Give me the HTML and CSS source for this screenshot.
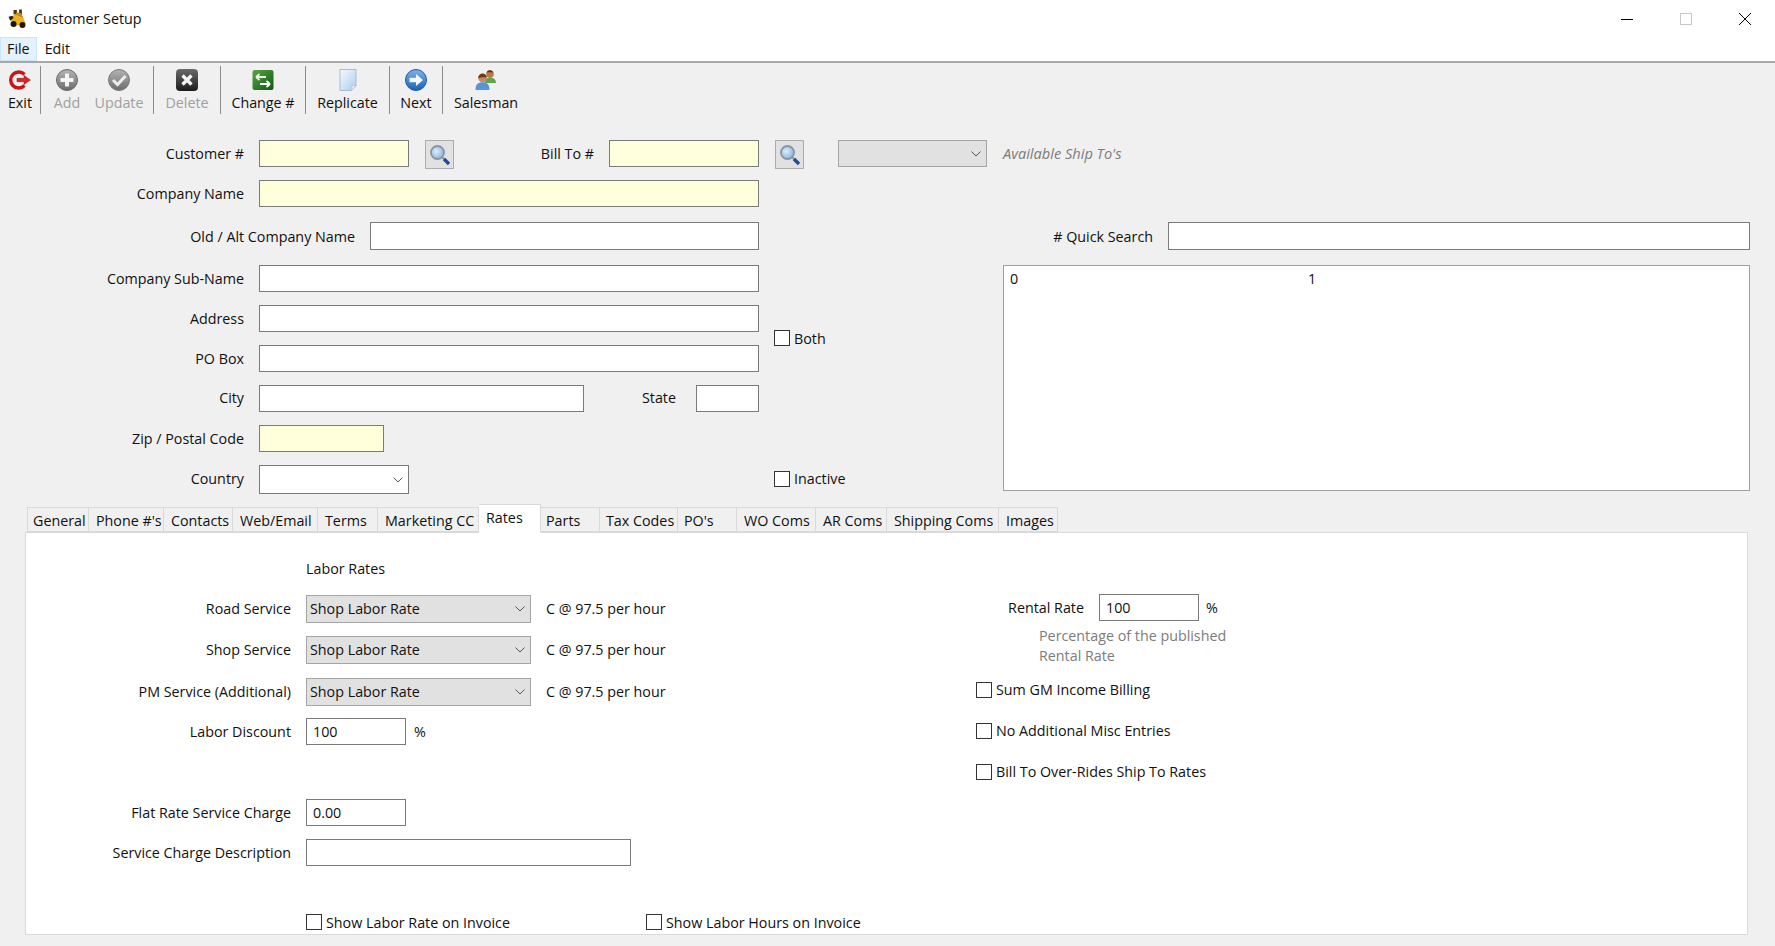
FILE: index.html
```html
<!DOCTYPE html>
<html lang="en">
<head>
<meta charset="utf-8">
<title>Customer Setup</title>
<link rel="stylesheet" href="styles.css">
</head>
<body>
<svg class="defs" width="0" height="0" aria-hidden="true">
  <defs>
    <linearGradient id="gGrey" x1="0" y1="0" x2="0" y2="1"><stop offset="0" stop-color="#b4b4b4"/><stop offset="1" stop-color="#6c6c6c"/></linearGradient>
    <linearGradient id="gDark" x1="0" y1="0" x2="0" y2="1"><stop offset="0" stop-color="#6a6a6a"/><stop offset="1" stop-color="#1c1c1c"/></linearGradient>
    <linearGradient id="gGreen" x1="0" y1="0" x2="1" y2="1"><stop offset="0" stop-color="#5aa548"/><stop offset="1" stop-color="#0f5a0d"/></linearGradient>
    <linearGradient id="gBlue" x1="0" y1="0" x2="0" y2="1"><stop offset="0" stop-color="#7fb4ea"/><stop offset="1" stop-color="#1c60b4"/></linearGradient>
    <linearGradient id="gPaper" x1="0" y1="0" x2="1" y2="1"><stop offset="0" stop-color="#f6fafe"/><stop offset="1" stop-color="#a9cdee"/></linearGradient>
    <radialGradient id="gLens" cx="0.4" cy="0.4" r="0.7"><stop offset="0" stop-color="#dcecfb"/><stop offset="1" stop-color="#7fb0e0"/></radialGradient>
  </defs>
</svg>

<header class="titlebar">
  <svg class="logo" viewBox="0 0 18 18" width="20" height="20">
    <path d="M5 1h3v4H5z M10 .5h2.500v5.500H10z" fill="#4a3414"/>
    <path d="M1.500 9 6 5l8 3.500 2 5-9 1.500z" fill="#eeb21c"/>
    <path d="M6 5 8 3l4 1 2 4.500z" fill="#c98a10"/>
    <circle cx="5" cy="13.500" r="2.700" fill="#1c1710"/>
    <circle cx="13" cy="14.500" r="2.700" fill="#1c1710"/>
    <path d="M.5 7l3.500-1 1 2-3 2.500z" fill="#2a2016"/>
  </svg>
  <span class="title-text">Customer Setup</span>
  <div class="win-buttons">
    <svg viewBox="0 0 14 14" width="14" height="14"><path d="M1 7.500h12" stroke="#000" stroke-width="1"/></svg>
    <svg viewBox="0 0 14 14" width="14" height="14"><rect x="1.500" y="1.500" width="11" height="11" fill="none" stroke="#c8c8c8"/></svg>
    <svg viewBox="0 0 14 14" width="14" height="14"><path d="M1 1l12 12M13 1 1 13" stroke="#000" stroke-width="1"/></svg>
  </div>
</header>

<nav class="menubar">
  <span class="menu-item menu-active">File</span>
  <span class="menu-item">Edit</span>
</nav>

<div class="toolbar">
  <div class="tool w-exit">
    <svg viewBox="0 0 24 24" width="24" height="24"><path d="M16.500 6.500A8 8 0 1 0 16.500 17.500" fill="none" stroke="#c81414" stroke-width="3.400"/><path d="M9 10.300h7V7.500l6.500 4.500-6.500 4.500v-2.800H9z" fill="#d8252a" stroke="#8c1010" stroke-width=".5"/></svg>
    <span class="tool-label">Exit</span>
  </div>
  <span class="tool-sep"></span>
  <div class="tool w-add">
    <svg viewBox="0 0 24 24" width="24" height="24"><circle cx="12" cy="12" r="10.500" fill="url(#gGrey)" stroke="#6a6a6a"/><path d="M10 5.500h4V10h4.500v4H14v4.500h-4V14H5.500v-4H10z" fill="#f4f4f4"/></svg>
    <span class="tool-label is-off">Add</span>
  </div>
  <div class="tool w-update">
    <svg viewBox="0 0 24 24" width="24" height="24"><circle cx="12" cy="12" r="10.500" fill="url(#gGrey)" stroke="#7a7a7a"/><path d="M6 12l4.500 4.500L18.500 8" fill="none" stroke="#ececec" stroke-width="3"/></svg>
    <span class="tool-label is-off">Update</span>
  </div>
  <span class="tool-sep sep-after-update"></span>
  <div class="tool w-delete">
    <svg viewBox="0 0 24 24" width="24" height="24"><rect x="1" y="1" width="22" height="22" rx="4" fill="url(#gDark)"/><path d="M7.500 7.500l9 9M16.500 7.500l-9 9" stroke="#f4f4f4" stroke-width="3.400"/></svg>
    <span class="tool-label is-off">Delete</span>
  </div>
  <span class="tool-sep"></span>
  <div class="tool w-change">
    <svg viewBox="0 0 24 24" width="24" height="24"><rect x="1.500" y="2" width="21" height="20" rx="2" fill="url(#gGreen)"/><path d="M5 9h10M5 9l3.500-3M5 9l3.500 3" fill="none" stroke="#e6f2e0" stroke-width="1.800"/><path d="M19 16H9M19 16l-3.500-3M19 16l-3.500 3" fill="none" stroke="#fff" stroke-width="1.800"/></svg>
    <span class="tool-label">Change #</span>
  </div>
  <span class="tool-sep"></span>
  <div class="tool w-replicate">
    <svg viewBox="0 0 24 24" width="24" height="24"><path d="M4 1.500h16v16L15.500 22.500H4z" fill="url(#gPaper)" stroke="#a9bdd2"/><path d="M15.500 22.500l.5-5h4z" fill="#e6eef6" stroke="#a9bdd2" stroke-width=".6"/></svg>
    <span class="tool-label">Replicate</span>
  </div>
  <span class="tool-sep"></span>
  <div class="tool w-next">
    <svg viewBox="0 0 24 24" width="24" height="24"><circle cx="12" cy="12" r="10.500" fill="url(#gBlue)" stroke="#1d5aa8"/><path d="M5.500 9.800h6.500V6l7 6-7 6v-3.800H5.500z" fill="#f4f8fc"/></svg>
    <span class="tool-label">Next</span>
  </div>
  <span class="tool-sep"></span>
  <div class="tool w-salesman">
    <svg viewBox="0 0 24 24" width="24" height="24"><circle cx="16" cy="6" r="3.800" fill="#b87a48"/><path d="M12.500 4.500A3.800 3.800 0 0 1 19.500 4.800C17.500 4 15 4.500 12.500 4.500z" fill="#5a3418"/><path d="M11 15c0-4 2-5.500 5-5.500s6 1.500 6 5.500z" fill="#63a54c"/><circle cx="8.500" cy="10" r="4.300" fill="#c98a58"/><path d="M4.200 10a4.300 4.300 0 0 1 8.600-.5C10 9 7 9 4.200 10z" fill="#6a3c1c"/><path d="M1.500 22c0-6 2.500-7.800 7-7.800s7 1.800 7 7.800z" fill="#5a94d8"/></svg>
    <span class="tool-label">Salesman</span>
  </div>
</div>

<main class="form">
  <div class="head-row">
    <label class="lbl lbl-main">Customer #</label>
    <input class="field req w-customer" type="text">
    <button class="find" type="button" aria-label="Find"><svg viewBox="0 0 22 22" width="22" height="22"><circle cx="8.500" cy="8.500" r="6.500" fill="url(#gLens)" stroke="#8a949e" stroke-width="1.800"/><path d="M13.500 13.500l2 2" stroke="#8a949e" stroke-width="2"/><path d="M15 15l5 5" stroke="#1f4aa0" stroke-width="3.400"/></svg></button>
    <label class="lbl lbl-bill">Bill To #</label>
    <input class="field req w-bill" type="text">
    <button class="find" type="button" aria-label="Find"><svg viewBox="0 0 22 22" width="22" height="22"><circle cx="8.500" cy="8.500" r="6.500" fill="url(#gLens)" stroke="#8a949e" stroke-width="1.800"/><path d="M13.500 13.500l2 2" stroke="#8a949e" stroke-width="2"/><path d="M15 15l5 5" stroke="#1f4aa0" stroke-width="3.400"/></svg></button>
    <div class="combo combo-ship"><svg class="chev" viewBox="0 0 10 6" width="10" height="6"><path d="M.5.500 5 5 9.500.500" fill="none" stroke="#555"/></svg></div>
    <span class="ship-note">Available Ship To's</span>
  </div>

  <div class="columns">
    <div class="left-col">
      <div class="row"><label class="lbl lbl-main">Company Name</label><input class="field req grow" type="text"></div>
      <div class="row"><label class="lbl lbl-old">Old / Alt Company Name</label><input class="field grow" type="text"></div>
      <div class="row"><label class="lbl lbl-main">Company Sub-Name</label><input class="field grow" type="text"></div>
      <div class="row"><label class="lbl lbl-main">Address</label><input class="field grow" type="text"></div>
      <div class="row"><label class="lbl lbl-main">PO Box</label><input class="field grow" type="text"></div>
      <div class="row"><label class="lbl lbl-main lbl-up">City</label><input class="field w-city" type="text"><label class="lbl lbl-state lbl-up">State</label><input class="field grow" type="text"></div>
      <div class="row"><label class="lbl lbl-main">Zip / Postal Code</label><input class="field req w-zip" type="text"></div>
      <div class="row"><label class="lbl lbl-main">Country</label><div class="combo combo-country"><svg class="chev" viewBox="0 0 10 6" width="10" height="6"><path d="M.5.500 5 5 9.500.500" fill="none" stroke="#555"/></svg></div></div>
    </div>

    <div class="mid-col">
      <label class="check"><input type="checkbox"><span class="low">Both</span></label>
      <label class="check"><input type="checkbox"><span>Inactive</span></label>
    </div>

    <div class="right-col">
      <div class="quick"><label class="lbl lbl-quick">#&nbsp;Quick Search</label><input class="field grow" type="text"></div>
      <div class="list">
        <span class="list-col">0</span>
        <span class="list-col">1</span>
      </div>
    </div>
  </div>

  <div class="tabs">
    <span class="tab t1">General</span>
    <span class="tab t2">Phone #'s</span>
    <span class="tab t3">Contacts</span>
    <span class="tab t4">Web/Email</span>
    <span class="tab t5">Terms</span>
    <span class="tab t6">Marketing CC</span>
    <span class="tab tab-active t7">Rates</span>
    <span class="tab t8">Parts</span>
    <span class="tab t9">Tax Codes</span>
    <span class="tab t10">PO's</span>
    <span class="tab t11">WO Coms</span>
    <span class="tab t12">AR Coms</span>
    <span class="tab t13">Shipping Coms</span>
    <span class="tab t14">Images</span>
  </div>

  <section class="panel">
    <div class="rates-left">
      <div class="prow"><span class="plbl"></span><span class="text">Labor Rates</span></div>
      <div class="prow"><label class="plbl">Road Service</label><div class="combo combo-rate"><span>Shop Labor Rate</span><svg class="chev" viewBox="0 0 10 6" width="10" height="6"><path d="M.5.500 5 5 9.500.500" fill="none" stroke="#555"/></svg></div><span class="text rate-note">C @ 97.5 per hour</span></div>
      <div class="prow"><label class="plbl">Shop Service</label><div class="combo combo-rate"><span>Shop Labor Rate</span><svg class="chev" viewBox="0 0 10 6" width="10" height="6"><path d="M.5.500 5 5 9.500.500" fill="none" stroke="#555"/></svg></div><span class="text rate-note">C @ 97.5 per hour</span></div>
      <div class="prow"><label class="plbl">PM Service (Additional)</label><div class="combo combo-rate"><span>Shop Labor Rate</span><svg class="chev" viewBox="0 0 10 6" width="10" height="6"><path d="M.5.500 5 5 9.500.500" fill="none" stroke="#555"/></svg></div><span class="text rate-note">C @ 97.5 per hour</span></div>
      <div class="prow"><label class="plbl">Labor Discount</label><input class="field w-num" type="text" value="100"><span class="text pct">%</span></div>
      <div class="prow"><label class="plbl">Flat Rate Service Charge</label><input class="field w-num" type="text" value="0.00"></div>
      <div class="prow"><label class="plbl">Service Charge Description</label><input class="field w-desc" type="text"></div>
      <div class="prow"><span class="plbl"></span><label class="check w-show"><input type="checkbox"><span class="low">Show Labor Rate on Invoice</span></label><label class="check"><input type="checkbox"><span class="low">Show Labor Hours on Invoice</span></label></div>
    </div>

    <div class="rates-right">
      <div class="rental"><label class="lbl lbl-rental">Rental Rate</label><input class="field w-num" type="text" value="100"><span class="text pct">%</span></div>
      <p class="hint">Percentage of the published<br>Rental Rate</p>
      <label class="check opt opt-1"><input type="checkbox"><span>Sum GM Income Billing</span></label>
      <label class="check opt opt-2"><input type="checkbox"><span>No Additional Misc Entries</span></label>
      <label class="check opt opt-3"><input type="checkbox"><span>Bill To Over-Rides Ship To Rates</span></label>
    </div>
  </section>
</main>
</body>
</html>
```

FILE: styles.css
```css
* { box-sizing: border-box; }
html, body { margin: 0; height: 100%; }
body {
  width: 1775px;
  height: 946px;
  overflow: hidden;
  background: #f0f0f0;
  color: #111;
  font: 14.3px/20px "Open Sans", "Noto Sans", sans-serif;
}
.defs { position: absolute; }

.titlebar {
  height: 37px;
  background: #fff;
  display: flex;
  align-items: center;
  padding-left: 8px;
}
.logo { margin-right: 6px; }
.title-text { flex: 1; }
.win-buttons { display: flex; gap: 45px; padding-right: 23px; }

.menubar {
  height: 26px;
  background: #fff;
  display: flex;
  border-bottom: 2px solid #a8a8a8;
}
.menu-item { padding: 2px 7px 0 8px; height: 24px; }
.menu-active { background: #e5f1fb; border: 1px solid #cce4f7; padding: 1px 6px 0; }

.toolbar {
  height: 52px;
  display: flex;
  padding-top: 3px;
}
.tool {
  display: flex;
  flex-direction: column;
  align-items: center;
  padding-top: 2px;
}
.tool svg { flex: none; height: 24px; }
.tool-label { margin-top: 1px; white-space: nowrap; }
.is-off { color: #a0a0a0; }
.tool-sep { width: 1px; height: 48px; background: #8c8c8c; }
.sep-after-update { margin-left: 8px; }
.w-exit { width: 40px; }
.w-add { width: 52px; }
.w-update { width: 52px; }
.w-delete { width: 66px; }
.w-change { width: 84px; }
.w-replicate { width: 83px; }
.w-next { width: 52px; }
.w-salesman { width: 86px; }

.form { padding-top: 25px; }
.head-row { display: flex; height: 40px; align-items: flex-start; }
.lbl { white-space: nowrap; text-align: right; line-height: 27px; }
.lbl-main { width: 244px; margin-right: 15px; flex: none; }
.lbl-old { width: 355px; margin-right: 15px; flex: none; padding-top: 1px; }
.lbl-bill { width: 140px; margin-right: 15px; flex: none; }
.lbl-state { width: 92px; margin-right: 20px; flex: none; }
.lbl-up { line-height: 25px; }
.lbl-quick { width: 150px; flex: none; padding-top: 1px; }
.lbl-rental { width: 108px; flex: none; }

.field {
  height: 27px;
  border: 1px solid #7a7a7a;
  background: #fff;
  padding: 0 6px;
  font: inherit;
  color: inherit;
  border-radius: 0;
  outline: none;
}
.req { background: #ffffdc; }
.grow { flex: 1 1 0; width: 0; min-width: 0; }
.w-customer { width: 150px; }
.w-bill { width: 150px; }
.w-city { width: 325px; }
.w-zip { width: 125px; }
.w-num { width: 100px; }
.w-desc { width: 325px; }

.find {
  width: 29px;
  height: 29px;
  margin-left: 16px;
  padding: 2px;
  background: #e1e1e1;
  border: 1px solid #adadad;
  display: flex;
  align-items: center;
  justify-content: center;
}
.combo {
  display: flex;
  align-items: center;
  justify-content: space-between;
  height: 27px;
  border: 1px solid #a5a5a5;
  background: #e1e1e1;
  padding: 0 5px 0 3px;
}
.combo-ship { width: 149px; margin-left: 34px; justify-content: flex-end; }
.combo-country { width: 150px; height: 29px; background: #fff; border-color: #7a7a7a; justify-content: flex-end; }
.combo-rate { width: 225px; height: 28px; }
.ship-note { margin-left: 16px; font-style: italic; font-size: 14.6px; color: #7c7c7c; line-height: 27px; }

.columns { display: flex; }
.left-col {
  width: 759px;
  flex: none;
  display: grid;
  grid-template-columns: minmax(0, 1fr);
  grid-template-rows: 42px 43px 40px 40px 40px 40px 40px 29px;
}
.row { display: flex; align-items: flex-start; }
.row .field { height: 27px; }
.row:nth-child(2) .field { height: 28px; }

.mid-col {
  width: 229px;
  flex: none;
  padding: 150px 0 0 15px;
  display: flex;
  flex-direction: column;
  gap: 125px;
}
.check { display: flex; align-items: center; gap: 4px; height: 16px; white-space: nowrap; }
.check input {
  appearance: none;
  width: 16px;
  height: 16px;
  margin: 0;
  background: #fff;
  border: 1px solid #333;
  flex: none;
}
.low { padding-top: 2px; }

.right-col { width: 747px; margin-left: 15px; padding-top: 42px; }
.quick { display: flex; height: 43px; align-items: flex-start; gap: 15px; }
.quick .field { height: 28px; }
.list {
  height: 226px;
  background: #fff;
  border: 1px solid #a0a0a0;
  padding: 3px 6px;
  display: flex;
}
.list-col { width: 298px; }

.tabs { display: flex; margin: 11px 0 0 27px; height: 27px; align-items: flex-end; position: relative; z-index: 1; }
.tab {
  height: 25px;
  padding: 3px 0 0 7px;
  border: 1px solid #d9d9d9;
  border-left-width: 0;
  background: #f0f0f0;
  white-space: nowrap;
  overflow: hidden;
}
.t1 { width: 62px; border-left-width: 1px; padding-left: 5px; }
.t2 { width: 75px; }
.t3 { width: 69px; }
.t4 { width: 85px; }
.t5 { width: 60px; }
.t6 { width: 101px; }
.t7 { width: 62px; }
.t8 { width: 59px; padding-left: 5px; }
.t9 { width: 78px; padding-left: 6px; }
.t10 { width: 59px; padding-left: 6px; }
.t11 { width: 79px; }
.t12 { width: 71px; }
.t13 { width: 112px; }
.t14 { width: 59px; }
.tab-active { height: 29px; background: #fff; border-bottom-color: #fff; padding-top: 3px; margin-bottom: -1px; }

.panel {
  margin: 0 27px 0 25px;
  height: 403px;
  background: #fff;
  border: 1px solid #d9d9d9;
  display: flex;
  padding-top: 22px;
}
.rates-left {
  width: 950px;
  flex: none;
  display: grid;
  grid-template-rows: 40px 41px 42px 40px 81px 40px 75px 16px;
}
.prow { display: flex; align-items: flex-start; }
.plbl { width: 265px; margin-right: 15px; text-align: right; line-height: 27px; flex: none; white-space: nowrap; }
.text { line-height: 27px; white-space: nowrap; }
.combo-rate + .rate-note { margin-left: 15px; }
.pct { margin-left: 8px; }
.w-show { width: 340px; }

.rates-right { display: flex; flex-direction: column; }
.rental { display: flex; align-items: flex-start; height: 32px; margin-top: 39px; gap: 15px; }
.rental .pct { margin-left: -8px; }
.hint { margin: 0 0 0 63px; color: #7c7c7c; height: 40px; }
.opt-1 { margin-top: 16px; }
.opt-2 { margin-top: 25px; }
.opt-3 { margin-top: 25px; }
```
